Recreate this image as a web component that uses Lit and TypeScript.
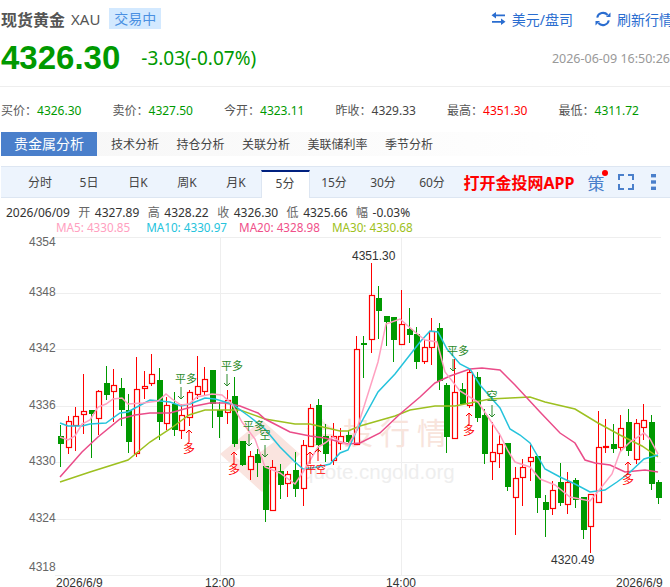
import { LitElement, html, svg, css } from 'lit'
import { customElement } from 'lit/decorators.js'

// [kind, high, bodyTop, bodyBottom, low], y values are chart pixels
type Bar = ['g' | 'r', number, number, number, number]

const BARS: Bar[] = [
  ['g', 423, 434, 442, 465], ['r', 414, 419, 445, 452], ['r', 405, 414, 423, 449], ['r', 372, 409, 412, 432],
  ['g', 408, 408, 412, 456], ['r', 388, 389, 416, 433], ['g', 364, 381, 393, 398], ['r', 367, 383, 389, 420],
  ['g', 376, 386, 408, 424], ['g', 392, 408, 440, 451], ['r', 355, 387, 451, 455], ['r', 369, 384, 386, 397],
  ['r', 352, 372, 381, 384], ['g', 366, 378, 420, 438], ['r', 395, 403, 421, 428], ['g', 390, 402, 428, 434],
  ['r', 402, 413, 428, 437], ['r', 388, 390, 415, 424], ['r', 354, 384, 392, 397], ['r', 365, 377, 389, 393],
  ['g', 368, 368, 402, 426], ['g', 400, 408, 415, 436], ['r', 388, 398, 410, 422], ['g', 375, 394, 442, 445],
  ['g', 439, 439, 463, 464], ['r', 449, 454, 467, 478], ['g', 447, 452, 461, 475], ['g', 464, 464, 508, 520],
  ['r', 458, 465, 508, 508], ['g', 462, 469, 483, 497], ['r', 469, 472, 481, 495], ['g', 450, 468, 487, 495],
  ['r', 438, 443, 486, 504], ['r', 402, 406, 444, 445], ['g', 397, 403, 443, 450], ['g', 422, 434, 452, 460],
  ['r', 421, 434, 458, 463], ['r', 426, 434, 441, 448], ['g', 428, 433, 440, 443], ['r', 334, 347, 442, 442],
  ['g', 334, 341, 343, 376], ['r', 261, 293, 337, 351], ['g', 284, 296, 309, 337], ['g', 314, 314, 320, 344],
  ['g', 315, 315, 338, 360], ['r', 288, 322, 342, 343], ['g', 306, 327, 333, 341], ['g', 325, 332, 360, 367],
  ['r', 337, 345, 359, 362], ['r', 316, 329, 345, 363], ['g', 321, 326, 379, 388], ['g', 381, 383, 435, 451],
  ['r', 357, 390, 436, 437], ['g', 381, 387, 402, 403], ['r', 367, 370, 403, 406], ['g', 370, 375, 416, 420],
  ['g', 407, 413, 452, 462], ['r', 420, 450, 459, 478], ['r', 431, 442, 451, 466], ['g', 441, 441, 485, 489],
  ['r', 465, 476, 495, 533], ['r', 457, 465, 475, 504], ['r', 443, 455, 459, 479], ['g', 454, 454, 496, 511],
  ['g', 493, 500, 508, 535], ['r', 479, 488, 506, 513], ['g', 461, 480, 501, 504], ['r', 470, 480, 502, 512],
  ['g', 476, 478, 498, 506], ['g', 495, 495, 528, 537], ['r', 492, 492, 524, 551], ['r', 409, 445, 500, 500],
  ['r', 417, 444, 445, 451], ['g', 422, 442, 447, 451], ['r', 413, 426, 445, 450], ['g', 407, 420, 449, 454],
  ['r', 417, 421, 457, 462], ['r', 402, 418, 425, 438], ['g', 413, 420, 482, 488], ['g', 478, 480, 496, 502],
]

const MA5 = '60,435 68,438 75,434 82,422 90,418 98,405 106,402 113,397 122,396 128,402 143,401 158,399 166,392 172,397 181,403 189,402 197,395 212,392 222,393 232,402 242,420 255,437 265,465 280,471 295,482 303,470 318,445 325,441 333,435 340,440 348,443 356,430 378,360 386,322 400,317 415,330 425,338 437,340 445,370 460,389 478,400 490,418 500,433 508,449 515,460 530,465 540,477 555,483 570,495 590,499 600,487 612,472 620,450 630,440 644,431 650,437 658,452'
const MA10 = '60,421 68,424 82,424 90,422 106,421 120,411 128,410 135,406 150,398 160,399 170,400 181,404 190,402 205,396 215,397 232,402 250,415 265,427 280,445 295,460 303,467 318,465 330,462 340,451 348,448 356,430 378,390 395,372 420,340 430,329 438,330 447,347 460,362 470,367 480,383 500,406 510,427 520,433 530,441 545,467 560,475 575,482 590,490 605,488 617,480 628,472 644,457 658,453'
const MA20 = '60,475 82,450 98,435 120,417 135,413 150,411 170,411 195,404 210,401 225,401 240,404 258,411 265,417 290,430 310,434 325,436 340,440 348,442 360,441 380,431 400,412 420,395 435,381 450,374 470,367 482,366 500,368 515,383 540,410 560,431 575,441 585,458 595,461 610,463 625,470 645,468 658,470'
const MA30 = '60,480 90,470 128,458 150,440 170,427 189,413 205,408 240,408 265,417 295,422 310,422 340,429 348,429 360,424 395,414 410,408 435,404 455,404 475,400 490,397 510,396 530,395 545,400 575,407 598,421 620,433 642,444 658,455'

const YS: [string, number, number][] = [
  ['4354', 235, 244], ['4348', 291, 294], ['4342', 347, 350], ['4336', 404, 407],
  ['4330', 460, 463], ['4324', 517, 520], ['4318', 573, 569],
]

const STATS = [
  ['买价：', '4326.30', 'up'], ['卖价：', '4327.50', 'up'], ['今开：', '4323.11', 'up'],
  ['昨收：', '4329.33', 'flat'], ['最高：', '4351.30', 'down'], ['最低：', '4311.72', 'up'],
]
const TABS = ['技术分析', '持仓分析', '关联分析', '美联储利率', '季节分析']
const PERIODS = ['分时', '5日', '日K', '周K', '月K', '5分', '15分', '30分', '60分']
const QUOTE = [['开', '4327.89'], ['高', '4328.22'], ['收', '4326.30'], ['低', '4325.66'], ['幅', '-0.03%']]

const barX = (i: number) => 60.3 + i * 7.57

@customElement('app-root')
export class AppRoot extends LitElement {
  static styles = css`
    :host {
      display: block;
      width: 670px;
      height: 587px;
      overflow: hidden;
      background: #fff;
      font-family: "Noto Sans", "Noto Sans CJK SC", sans-serif;
      font-size: 12px;
      color: #333;
    }
    .head {
      display: flex;
      align-items: center;
      height: 37px;
      margin-bottom: 1px;
      padding-left: 1px;
    }
    .name {
      font-size: 16px;
      font-weight: 700;
      color: #555;
    }
    .code {
      font-size: 15px;
      color: #555;
      margin-left: 6px;
    }
    .badge {
      margin-left: 9px;
      padding: 0 5px;
      height: 21px;
      line-height: 21px;
      font-size: 14px;
      color: #4a90e2;
      background: #d3e9ff;
    }
    .actions {
      display: flex;
      align-items: center;
      margin-left: auto;
      margin-right: -3px;
      color: #2a6dd0;
      font-size: 14px;
      white-space: nowrap;
    }
    .actions span {
      display: flex;
      align-items: center;
      gap: 6px;
    }
    .actions span + span {
      margin-left: 22px;
    }
    .price-row {
      display: flex;
      align-items: center;
      height: 40px;
      padding-left: 1px;
      margin-bottom: 8px;
    }
    .price {
      font-size: 33px;
      font-weight: 700;
      color: #090;
      font-family: "Liberation Sans", sans-serif;
    }
    .delta {
      margin-left: 21px;
      font-size: 19px;
      color: #090;
    }
    .time {
      margin-left: auto;
      font-size: 12.5px;
      color: #999;
    }
    .stats {
      display: grid;
      grid-template-columns: repeat(6, 111.5px);
      height: 45px;
      align-items: center;
      padding-left: 1px;
      border-top: 1px solid #eee;
      color: #555;
    }
    .up { color: #090; }
    .down { color: #f00; }
    .flat { color: #444; }
    .tabs {
      display: flex;
      align-items: center;
      height: 24px;
      margin-left: 1px;
      background: linear-gradient(90deg, #f6f6f6, #fff 90%);
      color: #444;
    }
    .tabs b {
      width: 96px;
      height: 24px;
      line-height: 24px;
      text-align: center;
      margin-right: 14px;
      font-size: 14px;
      font-weight: 400;
      color: #fff;
      background: #4a7fcb;
    }
    .tabs span {
      margin-right: 17.5px;
    }
    .periods {
      display: flex;
      align-items: center;
      height: 30px;
      margin: 10px 0 0 1px;
      padding-left: 14.5px;
      background: #edf4fd;
      border-top: 1px solid #dde6f2;
      border-bottom: 1px solid #dde6f2;
      color: #444;
    }
    .periods span {
      width: 49px;
      text-align: center;
    }
    .periods .on {
      align-self: flex-end;
      box-sizing: border-box;
      height: 28px;
      line-height: 24px;
      margin-bottom: -1px;
      background: #fff;
      border-top: 2px solid #00207f;
      border-left: 1px solid #dde6f2;
      border-right: 1px solid #dde6f2;
    }
    .periods .app {
      width: auto;
      margin-left: 7px;
      font-size: 16px;
      font-weight: 700;
      color: #f00;
    }
    .periods .ce {
      position: relative;
      width: auto;
      margin-left: 13px;
      font-size: 17px;
      color: #4a7fcb;
    }
    .ce i {
      position: absolute;
      top: 0;
      right: -4px;
      width: 6px;
      height: 6px;
      border-radius: 50%;
      background: #f00;
    }
    .full {
      margin-left: 14px;
    }
    .more {
      margin-left: 17px;
    }
    .quote {
      display: flex;
      height: 15px;
      line-height: 15px;
      margin-top: 7px;
      padding-left: 6px;
      white-space: nowrap;
    }
    .quote span {
      margin-left: 8.5px;
    }
    .quote em {
      font-style: normal;
      color: #666;
      margin-right: 4.5px;
    }
    .ma {
      display: flex;
      height: 15px;
      line-height: 15px;
      padding-left: 56px;
      gap: 12px;
      font-size: 11.7px;
      white-space: nowrap;
    }
    .ma5 { color: #ffa0c0; margin-right: 4px; }
    .ma10 { color: #25c3dc; }
    .ma20 { color: #f0508a; }
    .ma30 { color: #9dc020; }
    svg {
      display: block;
    }
    .chart text {
      font-family: "Liberation Sans", "Noto Sans CJK SC", sans-serif;
      font-size: 12px;
    }
    .chart .mark {
      font-family: "Noto Sans CJK SC", sans-serif;
      font-size: 11px;
    }
    .chart .small {
      font-size: 10px;
    }
    .chart .big {
      font-size: 12px;
    }
    .chart .wm {
      font-family: "Noto Sans CJK SC", sans-serif;
      font-size: 30px;
      letter-spacing: 7px;
    }
    .chart .url {
      font-size: 20.5px;
    }
  `

  private bars() {
    return BARS.map(([kind, high, top, bottom, low], i) => {
      const x = Math.round(barX(i))
      const c = kind === 'g' ? '#090' : '#f00'
      const wick = svg`<line x1=${x + 0.5} x2=${x + 0.5} y1=${high} y2=${low} stroke=${c} stroke-width="1" />`
      return kind === 'g'
        ? svg`${wick}<rect x=${x - 2} y=${top} width="6" height=${Math.max(bottom - top, 2)} fill=${c} />`
        : svg`${wick}<rect x=${x - 1.5} y=${top + 0.5} width="5" height=${Math.max(bottom - top, 1)} fill="#fff" stroke=${c} stroke-width="1.2" />`
    })
  }

  private down(x: number, y: number) {
    return svg`<path d="M${x} ${y}v12M${x - 3} ${y + 9}l3 3l3 -3" fill="none" stroke="#2a8a2a" />`
  }

  private up(x: number, y: number) {
    return svg`<path d="M${x} ${y + 12}v-12M${x - 3} ${y + 3}l3 -3l3 3" fill="none" stroke="#f00" />`
  }

  private label(x: number, y: number, text: string, fill: string, cls = 'mark') {
    return svg`<text class=${cls} x=${x} y=${y} text-anchor="middle" fill=${fill}>${text}</text>`
  }

  private chart() {
    const green = '#2a8a2a'
    const red = '#f00'
    return html`<svg class="chart" width="670" height="354" viewBox="0 233 670 354">
      ${YS.map(([t, y, ty]) => svg`
        <line x1="55" x2="661" y1=${y + 0.5} y2=${y + 0.5} stroke="#eee" />
        <text x="29" y=${ty} fill="#666">${t}</text>`)}
      <line x1="220.5" x2="220.5" y1="235" y2="573" stroke="#eee" />
      <line x1="401.5" x2="401.5" y1="235" y2="573" stroke="#eee" />

      <path d="M262 418l38 34l-38 38l-42 -38z" fill="#fae4df" />
      <path d="M232 452l30 -22l12 10l-30 22z" fill="#fff" />
      <text class="wm" x="306" y="442" fill="#f8e4dc">金投行情</text>
      <text class="url" x="302" y="477" fill="#eeeeee">quote.cngold.org</text>

      ${this.bars()}

      <polyline points=${MA30} fill="none" stroke="#9dc020" stroke-width="1.5" />
      <polyline points=${MA20} fill="none" stroke="#ea4c89" stroke-width="1.5" />
      <polyline points=${MA10} fill="none" stroke="#25c3dc" stroke-width="1.5" />
      <polyline points=${MA5} fill="none" stroke="#ffa0c0" stroke-width="1.5" />

      ${this.label(186, 381, '平多', green)}${this.down(181, 385)}
      ${this.label(232, 368, '平多', green)}${this.down(227, 372)}
      ${this.label(254, 428, '平多', green)}${this.down(249, 432)}
      ${this.label(265, 437, '空', green)}${this.down(265, 443)}
      ${this.label(458, 353, '平多', green)}${this.down(453, 357)}
      ${this.label(492, 398, '空', green)}${this.down(492, 403)}

      ${this.up(189, 428)}${this.label(189, 451, '多', red, 'mark big')}
      ${this.up(234, 450)}${this.label(234, 472, '多', red, 'mark big')}
      ${this.up(310, 450)}${this.up(318, 447)}${this.label(316, 471, '平空', red, 'mark small')}
      ${this.up(469, 411)}${this.label(469, 433, '多', red, 'mark big')}
      ${this.up(628, 460)}${this.label(628, 482, '多', red, 'mark big')}

      <text x="352" y="258" fill="#333">4351.30</text>
      <text x="551" y="562" fill="#333">4320.49</text>
      <text x="56" y="585" fill="#333">2026/6/9</text>
      <text x="220" y="585" fill="#333" text-anchor="middle">12:00</text>
      <text x="401" y="585" fill="#333" text-anchor="middle">14:00</text>
      <text x="616" y="585" fill="#333">2026/6/9</text>
    </svg>`
  }

  render() {
    return html`
      <div class="head">
        <span class="name">现货黄金</span>
        <span class="code">XAU</span>
        <span class="badge">交易中</span>
        <div class="actions">
          <span>
            <svg width="15" height="13" viewBox="0 0 15 13" fill="#2a6dd0">
              <path d="M5 0L0.5 3.2L5 6.4V4.2H14V2.4H5z" />
              <path d="M10 6.6L14.5 9.8L10 13V10.8H1V9H10z" />
            </svg>
            美元/盘司
          </span>
          <span>
            <svg width="16" height="16" viewBox="0 0 16 16" fill="none" stroke="#2a6dd0" stroke-width="2">
              <path d="M2.2 6.6A6 6 0 0 1 12.6 4" />
              <path d="M13.8 9.4A6 6 0 0 1 3.4 12" />
              <path d="M15.5 1.5V6H11z" fill="#2a6dd0" stroke="none" />
              <path d="M0.5 14.5V10H5z" fill="#2a6dd0" stroke="none" />
            </svg>
            刷新行情
          </span>
        </div>
      </div>
      <div class="price-row">
        <span class="price">4326.30</span>
        <span class="delta">-3.03(-0.07%)</span>
        <span class="time">2026-06-09 16:50:26</span>
      </div>
      <div class="stats">
        ${STATS.map(([k, v, c]) => html`<div>${k}<span class=${c}>${v}</span></div>`)}
      </div>
      <div class="tabs">
        <b>贵金属分析</b>
        ${TABS.map((t) => html`<span>${t}</span>`)}
      </div>
      <div class="periods">
        ${PERIODS.map((p) => html`<span class=${p === '5分' ? 'on' : ''}>${p}</span>`)}
        <span class="app">打开金投网APP</span>
        <span class="ce">策<i></i></span>
        <svg class="full" width="16" height="16" viewBox="0 0 16 16" fill="none" stroke="#4a7fcb" stroke-width="2">
          <path d="M1 6V1H6M10 1H15V6M15 10V15H10M6 15H1V10" />
        </svg>
        <svg class="more" width="5" height="16" viewBox="0 0 5 16" fill="#4a7fcb">
          <rect x="0" y="0" width="5" height="3.4" />
          <rect x="0" y="6.3" width="5" height="3.4" />
          <rect x="0" y="12.6" width="5" height="3.4" />
        </svg>
      </div>
      <div class="quote">
        2026/06/09
        ${QUOTE.map(([k, v]) => html`<span><em>${k}</em>${v}</span>`)}
      </div>
      <div class="ma">
        <span class="ma5">MA5: 4330.85</span>
        <span class="ma10">MA10: 4330.97</span>
        <span class="ma20">MA20: 4328.98</span>
        <span class="ma30">MA30: 4330.68</span>
      </div>
      ${this.chart()}
    `
  }
}

declare global {
  interface HTMLElementTagNameMap {
    'app-root': AppRoot
  }
}
